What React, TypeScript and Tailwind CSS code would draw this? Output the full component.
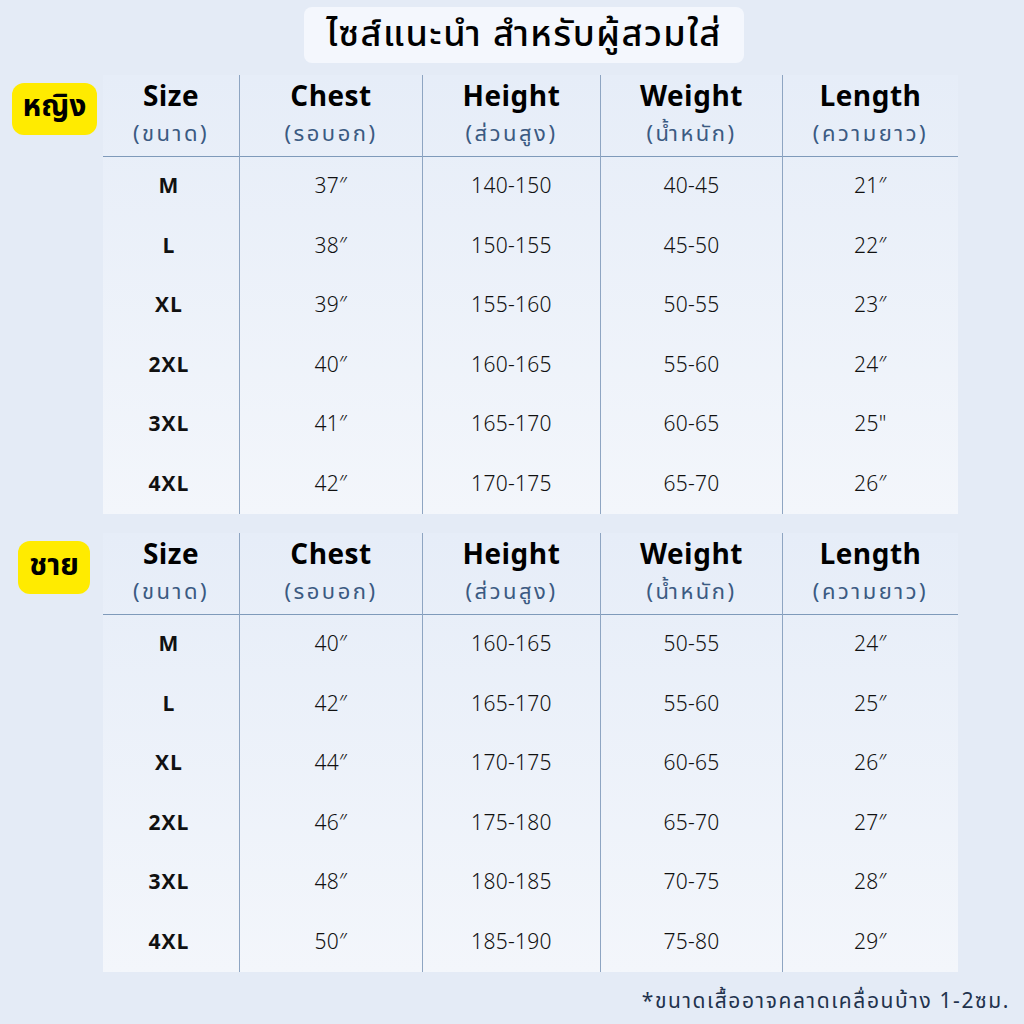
const FONT = { fontFamily: '"Noto Sans Thai", "Noto Sans", "DejaVu Sans", sans-serif' }

type Row = [string, string, string, string, string]

const women: Row[] = [
  ['M', '37″', '140-150', '40-45', '21″'],
  ['L', '38″', '150-155', '45-50', '22″'],
  ['XL', '39″', '155-160', '50-55', '23″'],
  ['2XL', '40″', '160-165', '55-60', '24″'],
  ['3XL', '41″', '165-170', '60-65', '25"'],
  ['4XL', '42″', '170-175', '65-70', '26″'],
]

const men: Row[] = [
  ['M', '40″', '160-165', '50-55', '24″'],
  ['L', '42″', '165-170', '55-60', '25″'],
  ['XL', '44″', '170-175', '60-65', '26″'],
  ['2XL', '46″', '175-180', '65-70', '27″'],
  ['3XL', '48″', '180-185', '70-75', '28″'],
  ['4XL', '50″', '185-190', '75-80', '29″'],
]

const headers = [
  { en: 'Size', th: '(ขนาด)', w: 'w-[136px]' },
  { en: 'Chest', th: '(รอบอก)', w: 'w-[183px]' },
  { en: 'Height', th: '(ส่วนสูง)', w: 'w-[178px]' },
  { en: 'Weight', th: '(น้ำหนัก)', w: 'w-[182px]' },
  { en: 'Length', th: '(ความยาว)', w: 'w-[176px]' },
]

function Table({ rows }: { rows: Row[] }) {
  return (
    <div className="flex bg-gradient-to-b from-[#e6edf8] to-[#f3f6fb]">
      {headers.map((h, ci) => (
        <div key={h.en} className={`${h.w} flex flex-col ${ci > 0 ? 'border-l border-[#8ea5c2]' : ''}`}>
          <div className="h-[82px] flex flex-col items-center justify-center border-b-[1.5px] border-[#7f9aba] pt-[2px]">
            <div className="text-[28px] font-bold leading-[36px] text-black tracking-[0.5px]">{h.en}</div>
            <div className="text-[22px] leading-[38px] text-[#3b5a82] tracking-[2.5px]">{h.th}</div>
          </div>
          {rows.map((r) => (
            <div
              key={r[0]}
              className={`h-[59.5px] flex items-center justify-center text-[21px] text-[#111] ${ci === 0 ? 'font-bold tracking-[1px] pr-[4px]' : 'font-light tracking-[0.3px]'}`}
            >
              {r[ci]}
            </div>
          ))}
        </div>
      ))}
    </div>
  )
}

function Section({ label, rows, badgeClass }: { label: string; rows: Row[]; badgeClass: string }) {
  return (
    <div className="flex items-start">
      <div className="w-[103px] flex">
        <div className={`${badgeClass} bg-[#ffeb00] rounded-[12px] flex items-center justify-center text-[30px] font-bold text-black leading-none`}>
          {label}
        </div>
      </div>
      <Table rows={rows} />
    </div>
  )
}

export default function App() {
  return (
    <div style={FONT} className="w-[1024px] h-[1024px] bg-[#e4ebf6] flex flex-col">
      <div className="flex justify-center pt-[7px] pl-[24px]">
        <div className="w-[440px] h-[56px] bg-[#f4f7fd] rounded-[8px] flex items-center justify-center text-[36px] font-medium text-black tracking-[1.5px]">
          ไซส์แนะนำ สำหรับผู้สวมใส่
        </div>
      </div>
      <div className="mt-[12px]">
        <Section label="หญิง" rows={women} badgeClass="ml-[12px] mt-[8px] w-[85px] h-[52px] pb-[4px]" />
      </div>
      <div className="mt-[19px]">
        <Section label="ชาย" rows={men} badgeClass="ml-[18px] mt-[8px] w-[72px] h-[53px] pb-[4px]" />
      </div>
      <div className="flex justify-end pr-[14px] pt-[14px] text-[21px] text-[#22324d] tracking-[1.6px]">
        *ขนาดเสื้ออาจคลาดเคลื่อนบ้าง 1-2ซม.
      </div>
    </div>
  )
}
